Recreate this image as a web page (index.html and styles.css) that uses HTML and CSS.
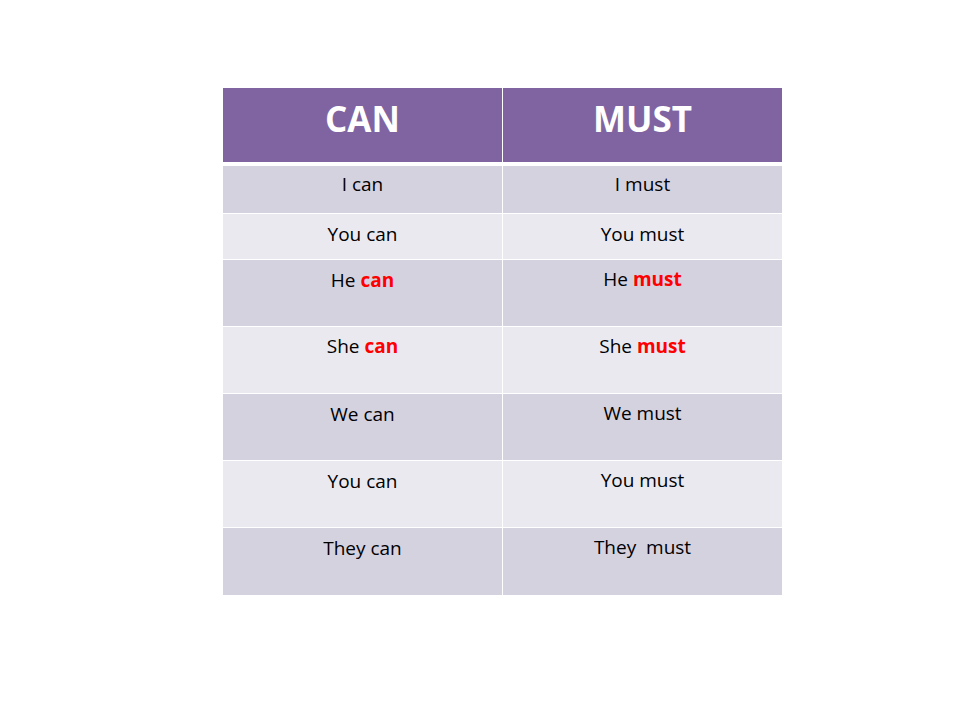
FILE: index.html
```html
<!DOCTYPE html>
<html>
<head>
<meta charset="utf-8">
<link rel="stylesheet" href="styles.css">
</head>
<body>
<div class="slide">
  <div class="table">
    <div class="row head">
      <div class="cell">CAN</div>
      <div class="cell">MUST</div>
    </div>
    <div class="row odd h47">
      <div class="cell">I can</div>
      <div class="cell">I must</div>
    </div>
    <div class="row even h45">
      <div class="cell">You can</div>
      <div class="cell">You must</div>
    </div>
    <div class="row odd h66">
      <div class="cell low">He <b class="red">can</b></div>
      <div class="cell">He <b class="red">must</b></div>
    </div>
    <div class="row even h66">
      <div class="cell">She <b class="red">can</b></div>
      <div class="cell">She <b class="red">must</b></div>
    </div>
    <div class="row odd h66">
      <div class="cell low">We can</div>
      <div class="cell">We must</div>
    </div>
    <div class="row even h66">
      <div class="cell low">You can</div>
      <div class="cell">You must</div>
    </div>
    <div class="row odd h67">
      <div class="cell low">They can</div>
      <div class="cell">They&nbsp; must</div>
    </div>
  </div>
</div>
</body>
</html>
```
FILE: styles.css
```css
html, body {
  margin: 0;
  padding: 0;
  background: #ffffff;
}
.slide {
  width: 960px;
  height: 720px;
  padding: 88px 0 0 223px;
  box-sizing: border-box;
  font-family: "Open Sans", "Noto Sans", sans-serif;
}
.table {
  width: 559px;
  display: flex;
  flex-direction: column;
  gap: 1px;
  background: #ffffff;
}
.row {
  display: flex;
  gap: 1px;
}
.cell {
  flex: 1 1 0;
  text-align: center;
  font-size: 19px;
  line-height: 24px;
  padding-top: 6px;
  color: #000000;
  box-sizing: border-box;
}
.head {
  height: 74px;
  margin-bottom: 3px;
}
.head .cell {
  background: #8064a2;
  color: #ffffff;
  font-weight: 700;
  font-size: 35px;
  line-height: 40px;
  padding-top: 11px;
}
.odd .cell { background: #d5d2e0; }
.even .cell { background: #ebe9f0; }
.h47 { height: 47px; }
.h45 { height: 45px; }
.h45 .cell { padding-top: 8px; }
.h66 { height: 66px; }
.h67 { height: 67px; }
.h66 .cell, .h67 .cell { padding-top: 7px; }
.h66 .cell.low, .h67 .cell.low { padding-top: 8px; }
.red {
  color: #ff0000;
  font-weight: 700;
}
```
